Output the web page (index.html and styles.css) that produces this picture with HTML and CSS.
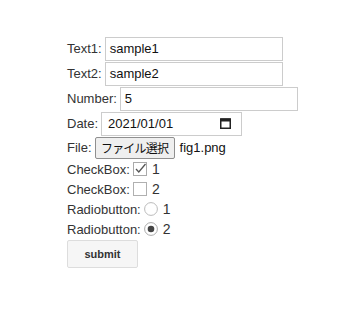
FILE: index.html
```html
<!DOCTYPE html>
<html>
<head>
<meta charset="utf-8">
<link rel="stylesheet" href="styles.css">
</head>
<body>
<form class="form">
  <div class="row"><span class="label">Text1:</span><span class="field w178">sample1</span></div>
  <div class="row"><span class="label">Text2:</span><span class="field w178">sample2</span></div>
  <div class="row"><span class="label">Number:</span><span class="field w178">5</span></div>
  <div class="row"><span class="label">Date:</span><span class="field date">2021/01/01<svg class="cal" width="11" height="11" viewBox="0 0 11 11"><rect x="0.75" y="1" width="9.5" height="9.25" fill="none" stroke="#222" stroke-width="1.5"/><rect x="0.5" y="0.5" width="10" height="3" fill="#222"/></svg></span></div>
  <div class="row frow"><span class="label">File:</span><span class="filebtn">ファイル選択</span><span class="fname">fig1.png</span></div>
  <div class="crow"><span class="label">CheckBox:</span><span class="cb"><svg width="14" height="14" viewBox="0 0 14 14"><rect x="0.5" y="0.5" width="13" height="13" fill="#fff" stroke="#aaa"/><path d="M3 7 L5.8 10 L12.5 2" fill="none" stroke="#555" stroke-width="1.3"/></svg></span><span class="val">1</span></div>
  <div class="crow"><span class="label">CheckBox:</span><span class="cb"><svg width="14" height="14" viewBox="0 0 14 14"><rect x="0.5" y="0.5" width="13" height="13" fill="#fff" stroke="#b0b0b0"/></svg></span><span class="val">2</span></div>
  <div class="crow"><span class="label">Radiobutton:</span><span class="rb"><svg width="14" height="14" viewBox="0 0 14 14"><circle cx="7" cy="7" r="6.4" fill="#fff" stroke="#bbb"/></svg></span><span class="val">1</span></div>
  <div class="crow"><span class="label">Radiobutton:</span><span class="rb"><svg width="14" height="14" viewBox="0 0 14 14"><circle cx="7" cy="7" r="6.4" fill="#fff" stroke="#aaa"/><circle cx="7" cy="7" r="3.3" fill="#444"/></svg></span><span class="val">2</span></div>
  <div class="srow"><span class="submit">submit</span></div>
</form>
</body>
</html>
```
FILE: styles.css
```css
html, body { margin: 0; padding: 0; background: #fff; }
body {
  font-family: "Liberation Sans", Arial, sans-serif;
  font-size: 13px;
  color: #333;
}
.form { padding: 36px 0 0 67px; display: flex; flex-direction: column; }
.row { display: flex; align-items: center; height: 25px; }
.frow { height: 23px; }
.crow { display: flex; align-items: center; height: 20px; }
.label { margin-right: 3px; }
.field {
  box-sizing: border-box;
  height: 24px;
  border: 1px solid #ccc;
  padding: 0 4px;
  display: flex;
  align-items: center;
  color: #111;
  font-size: 13px;
}
.w178 { width: 178px; }
.date { width: 141px; justify-content: space-between; padding: 0 10px 0 6px; }
.filebtn {
  box-sizing: border-box;
  height: 22px;
  width: 80px;
  padding: 0 4px;
  border: 1px solid #8f8f8f;
  border-radius: 2px;
  background: #efefef;
  color: #111;
  display: flex;
  align-items: center;
  justify-content: center;
  font-family: "Noto Sans CJK JP", sans-serif;
  font-size: 12px;
  letter-spacing: -0.8px;
}
.fname { margin-left: 5px; color: #111; }
.cb { margin: 0 5px 0 0; display: flex; }
.rb { margin: 0 5px 0 0; display: flex; }
.val { font-size: 14px; }
.srow { margin-top: 1px; display: flex; }
.submit {
  box-sizing: border-box;
  width: 71px;
  height: 28px;
  border: 1px solid #ddd;
  border-radius: 2px;
  background: #f6f6f6;
  display: flex;
  align-items: center;
  justify-content: center;
  font-weight: bold;
  font-size: 11px;
  color: #333;
}
```
